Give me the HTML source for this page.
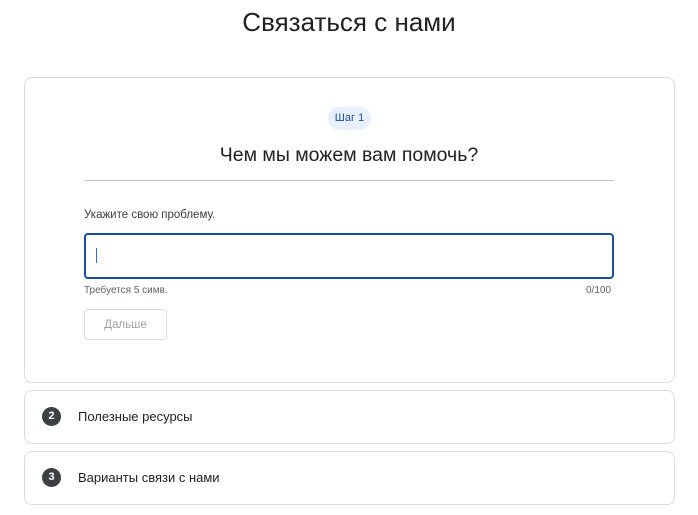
<!DOCTYPE html>
<html><head><meta charset="utf-8"><style>
*{box-sizing:border-box;margin:0;padding:0}
body{width:698px;height:515px;background:#fff;font-family:"Liberation Sans",sans-serif;color:#202124;position:relative;overflow:hidden}
.abs{position:absolute}
.card{position:absolute;left:24px;width:651px;border:1px solid #dadce0;border-radius:8px;background:#fff}
.num{position:absolute;left:17px;width:19px;height:19px;border-radius:50%;background:#3c4043;color:#fff;font-size:11px;font-weight:bold;text-align:center;line-height:19px}
.lbl{position:absolute;left:53px;font-size:13px;color:#202124}
</style></head><body>
<div class="abs" style="left:0;width:698px;top:7px;text-align:center;font-size:26px;color:#202124">Связаться с нами</div>
<div class="card" style="top:77px;height:306px"></div>
<div class="abs" style="left:328px;top:107px;width:43px;height:23px;border-radius:12px;background:#e8f0fe;color:#1a4f9c;font-size:11px;text-align:center;line-height:23px">Шаг 1</div>
<div class="abs" style="left:0;width:698px;top:144px;text-align:center;font-size:19.5px;color:#202124">Чем мы можем вам помочь?</div>
<div class="abs" style="left:84px;top:180px;width:530px;height:1px;background:#c6c6c6"></div>
<div class="abs" style="left:84px;top:209px;font-size:11.5px;color:#3c4043">Укажите свою проблему.</div>
<div class="abs" style="left:84px;top:233px;width:530px;height:46px;border:2px solid #174ea6;border-radius:4px"></div>
<div class="abs" style="left:96px;top:248px;width:1px;height:15px;background:#1a73e8"></div>
<div class="abs" style="left:84px;top:285px;font-size:10px;color:#5f6368">Требуется 5 симв.</div>
<div class="abs" style="left:586px;top:285px;font-size:10px;color:#5f6368">0/100</div>
<div class="abs" style="left:84px;top:309px;width:83px;height:31px;border:1px solid #dadce0;border-radius:4px;color:#a0a0a0;font-size:11.5px;text-align:center;line-height:30px">Дальше</div>
<div class="card" style="top:390px;height:54px"><div class="num" style="top:16px">2</div><div class="lbl" style="top:18px">Полезные ресурсы</div></div>
<div class="card" style="top:451px;height:54px"><div class="num" style="top:16px">3</div><div class="lbl" style="top:18px">Варианты связи с нами</div></div>
</body></html>
